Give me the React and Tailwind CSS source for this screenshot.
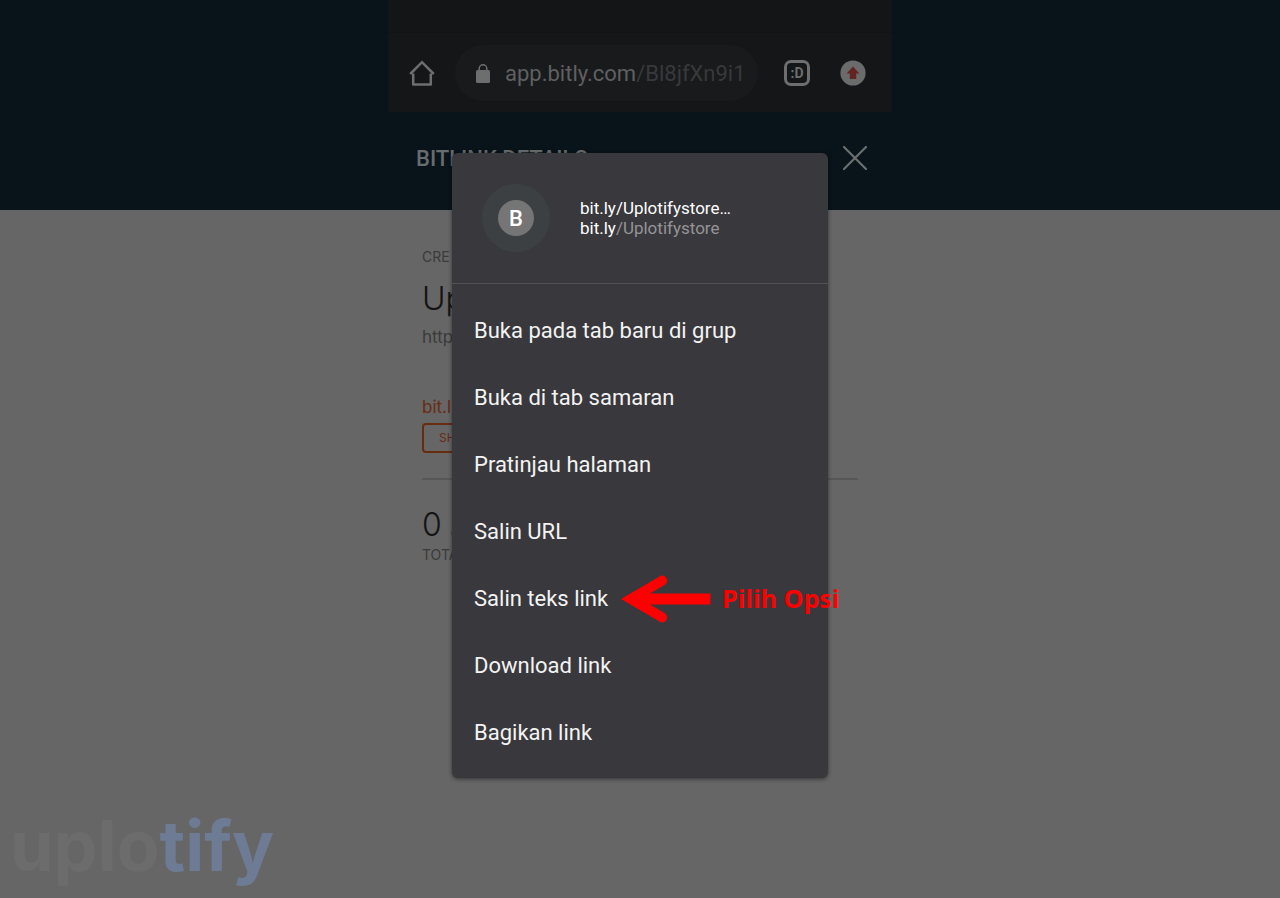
import React from 'react';

const menuItems = [
  'Buka pada tab baru di grup',
  'Buka di tab samaran',
  'Pratinjau halaman',
  'Salin URL',
  'Salin teks link',
  'Download link',
  'Bagikan link',
];

const HomeIcon = () => (
  <svg width="26" height="26" viewBox="0 0 26 26" fill="none" stroke="#6d6e6e" strokeWidth="2.5" strokeLinejoin="round">
    <path d="M4.2 13.4V24.4H21.8V13.4" />
    <path d="M1.2 14 13 2.2 24.8 14" strokeLinejoin="miter" />
  </svg>
);

const LockIcon = () => (
  <svg width="16" height="20" viewBox="0 0 16 20">
    <rect x="1" y="6" width="14" height="13" rx="1.5" fill="#6d6e6e" />
    <path d="M4.2 7V4.6a3.8 3.8 0 0 1 7.6 0V7" fill="none" stroke="#6d6e6e" strokeWidth="1.5" />
  </svg>
);

const UpdateIcon = () => (
  <svg width="26" height="26" viewBox="0 0 26 26">
    <circle cx="13" cy="13" r="12.6" fill="#6a6b6b" />
    <path d="M13 6.4 19.4 13.4H16.2V19H9.8V13.4H6.6Z" fill="#642522" />
  </svg>
);

const CloseIcon = () => (
  <svg width="26" height="26" viewBox="0 0 26 26" stroke="#6b6f70" strokeWidth="2.2" strokeLinecap="round">
    <path d="M2 2 24 24M24 2 2 24" />
  </svg>
);

const ArrowIcon = () => (
  <svg width="90" height="48" viewBox="0 0 90 48" fill="#ff0000">
    <path d="M0 24 39 1.2C42 -.4 45.6 1.4 46 4.8C46.2 7.2 45.2 9 43.4 10L29 18.6H89.4V29.4H29L43.4 38C45.2 39 46.2 40.8 46 43.2C45.6 46.6 42 48.4 39 46.8Z" />
  </svg>
);

const BrowserBar = () => (
  <div className="bg-[#151618]">
    <div className="h-[33px] border-b border-[#121315] bg-[#141517]" />
    <div className="flex h-[79px] items-center pr-[26px] pl-[21px]">
      <button type="button" aria-label="Home">
        <HomeIcon />
      </button>
      <div className="ml-5 flex h-14 w-[303px] items-center gap-[14px] rounded-full bg-[#191a1c] pt-0.5 pl-5">
        <LockIcon />
        <a href="#url" className="text-[22px] whitespace-nowrap text-[#5f6061]">
          app.bitly.com<span className="text-[#38393a]">/Bl8jfXn9i1</span>
        </a>
      </div>
      <button type="button" className="ml-[26px] flex size-[26px] items-center justify-center rounded-[7px] border-[3px] border-[#6d6e6e] text-sm font-bold text-[#6d6e6e]">
        :D
      </button>
      <button type="button" aria-label="Update" className="ml-auto">
        <UpdateIcon />
      </button>
    </div>
  </div>
);

const LinkDetails = () => (
  <main className="mx-auto w-[504px] px-[34px] pt-[37px] font-[Inter,sans-serif] text-[#3a3a3a]">
    <p className="text-sm leading-5">CRE</p>
    <h2 className="mt-2 text-[32px] leading-[48px] font-light text-[#141414]">Up</h2>
    <p className="mt-0.5 text-[17px] leading-6">http</p>
    <div className="mt-12 text-[17px] leading-5">
      <a href="#bitlink" className="text-[#672b12]">bit.ly</a>
    </div>
    <button type="button" className="mt-[6px] block h-[30px] rounded-sm border-2 border-[#672b12] px-[15px] text-xs text-[#672b12]">
      SHARE
    </button>
    <div className="mt-[25px] border-t-2 border-[#575757] pt-[25px]">
      <div className="flex items-center gap-2 text-[32px] leading-10 font-light text-[#141414]">
        0
        <svg width="18" height="20" viewBox="0 0 18 20" fill="#505050">
          <path d="M1 16h3v4H1zM7 10h3v10H7zM13 3h3v17h-3z" />
        </svg>
      </div>
      <p className="text-sm leading-5">TOTAL</p>
    </div>
  </main>
);

const ContextMenu = () => (
  <div role="dialog" aria-label="bit.ly/Uplotifystore" className="w-[376px] rounded-md bg-[#39383c] pb-3 shadow-[0_1px_4px_rgba(0,0,0,0.5)]">
    <div className="flex h-[131px] items-center gap-[30px] border-b border-[#515054] pl-[30px]">
      <div className="flex size-[68px] items-center justify-center rounded-full bg-[#3c4043]">
        <div className="flex size-9 items-center justify-center rounded-full bg-[#757575] text-[22px] font-medium text-white">
          B
        </div>
      </div>
      <div className="text-[17px] leading-5 text-white">
        <p>bit.ly/Uplotifystore…</p>
        <p>bit.ly<span className="text-[#959497]">/Uplotifystore</span></p>
      </div>
    </div>
    <ul className="pt-[13px]">
      {menuItems.map((item) => (
        <li key={item} className="relative">
          <button type="button" className="flex h-[67px] w-full items-center pl-[22px] text-[22px] text-[#f3f3f3]">
            {item}
          </button>
          {item === 'Salin teks link' && (
            <div className="pointer-events-none absolute inset-y-0 left-[169px] flex items-center gap-[11px]">
              <ArrowIcon />
              <span className="font-['Open_Sans',sans-serif] text-[25px] font-bold whitespace-nowrap text-[#ff0000]">
                Pilih Opsi
              </span>
            </div>
          )}
        </li>
      ))}
    </ul>
  </div>
);

const App = () => {
  return (
    <div className="relative min-h-screen overflow-hidden bg-[#666666] font-[Roboto,sans-serif]">
      <header className="bg-[#08141a]">
        <div className="mx-auto w-[504px]">
          <BrowserBar />
          <div className="flex h-[98px] items-center justify-between pr-6 pb-[6px] pl-7">
            <h1 className="text-[22px] font-medium text-[#686c6e]">BITLINK DETAILS</h1>
            <button type="button" aria-label="Close">
              <CloseIcon />
            </button>
          </div>
        </div>
      </header>
      <LinkDetails />
      <div className="absolute inset-x-0 top-[153px] flex justify-center">
        <ContextMenu />
      </div>
      <div className="absolute bottom-3 left-2.5 font-[Inter,sans-serif] text-[70px] leading-[80px] font-bold text-[#6c6c6c]">
        uplo<span className="text-[#6e7b94]">tify</span>
      </div>
    </div>
  );
};

export default App;
